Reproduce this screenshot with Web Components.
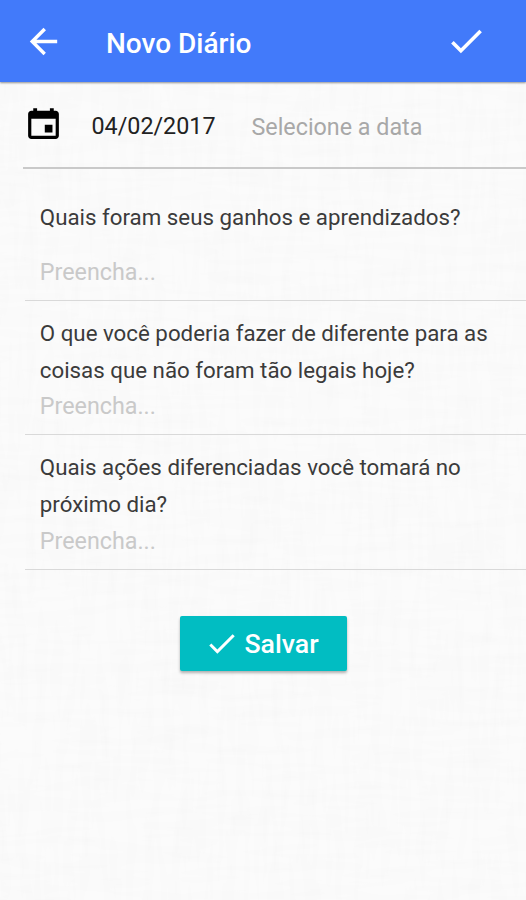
<!DOCTYPE html>
<html lang="pt-BR">
<head>
<meta charset="utf-8">
<title>Novo Diário</title>
<style>
html, body { margin: 0; height: 100%; }
body { font-family: Roboto, sans-serif; background: #f9f9f9; overflow: hidden; }
</style>
</head>
<body>
<script>
const ICONS = {
  back: "M427 234.625H167.296l119.702-119.702L256 85 85 256l171 171 29.922-29.924-118.626-119.701H427v-42.75z",
  check: "M186.301 339.893L96 249.461l-32 30.507L186.301 402 448 140.506 416 110z",
  calendar: "M368.005 272h-96v96h96v-96zm-32-208v32h-160V64h-48v32h-24.01c-22.002 0-40 17.998-40 40v272c0 22.002 17.998 40 40 40h304.01c22.002 0 40-17.998 40-40V136c0-22.002-17.998-40-40-40h-24V64h-48zm72 344h-304.01V196h304.01v212z"
};

class UiIcon extends HTMLElement {
  connectedCallback() {
    this.attachShadow({ mode: "open" }).innerHTML = `
      <style>:host{display:block;flex:none;width:var(--size,41px);height:var(--size,41px)}svg{display:block;width:100%;height:100%;fill:currentColor}</style>
      <svg viewBox="0 0 512 512" aria-hidden="true"><path d="${ICONS[this.getAttribute("name")]}"/></svg>`;
  }
}

class AppBar extends HTMLElement {
  connectedCallback() {
    this.attachShadow({ mode: "open" }).innerHTML = `
      <style>
        :host{display:flex;align-items:center;box-sizing:border-box;height:82px;padding:1px 39px 0 23px;
          background:#427afa;color:#fff;box-shadow:0 1px 2px rgba(0,0,0,.42)}
        h1{flex:1;margin:4px 0 0 42px;font-size:28px;line-height:36px;font-weight:500}
      </style>
      <ui-icon name="back"></ui-icon><h1><slot></slot></h1><ui-icon name="check"></ui-icon>`;
  }
}

class DateRow extends HTMLElement {
  connectedCallback() {
    this.attachShadow({ mode: "open" }).innerHTML = `
      <style>
        :host{display:flex;align-items:center;box-sizing:border-box;height:86.5px;margin-left:23px;
          padding:3px 0 0;border-bottom:2px solid #c9c9c9;font-size:23.3px;line-height:28px;color:#222}
        ui-icon{color:#000;--size:41px;margin:-5px 27.5px 0 0}
        .hint{margin:2px 0 0 36px;color:#a8a8a8}
      </style>
      <ui-icon name="calendar"></ui-icon><span><slot></slot></span><span class="hint">${this.getAttribute("hint")}</span>`;
  }
}

class DiaryQuestion extends HTMLElement {
  connectedCallback() {
    this.attachShadow({ mode: "open" }).innerHTML = `
      <style>
        :host{display:flex;flex-direction:column;box-sizing:border-box;height:var(--height,134.5px);
          margin-left:25px;padding:var(--top,14px) 24px 0 14.8px;border-bottom:1.5px solid #d9d9d9}
        .label{font-size:22.3px;line-height:37px;color:#3b3b3b}
        .entry{margin-top:var(--gap,4.3px);font-size:23.3px;line-height:26px;color:#c9c9c9}
      </style>
      <div class="label"><slot></slot></div><div class="entry">Preencha...</div>`;
  }
}

class SaveButton extends HTMLElement {
  connectedCallback() {
    this.attachShadow({ mode: "open" }).innerHTML = `
      <style>
        :host{display:flex;justify-content:center;margin:46px 0 0 1px}
        button{display:flex;align-items:center;justify-content:center;gap:5.5px;width:167px;height:55px;
          border:0;border-radius:2px;padding:2px 3.5px 0 0;background:#01bdc2;color:#fff;
          font:500 26.7px/32px Roboto,sans-serif;box-shadow:0 2px 3px rgba(0,0,0,.3)}
        ui-icon{--size:34px}
      </style>
      <button type="button"><ui-icon name="check"></ui-icon><span><slot></slot></span></button>`;
  }
}

class DiaryPage extends HTMLElement {
  connectedCallback() {
    this.attachShadow({ mode: "open" }).innerHTML = `
      <style>
        :host{display:block;position:relative;height:900px;max-height:100vh;isolation:isolate;overflow:hidden}
        .linen{position:absolute;inset:0;width:100%;height:100%;z-index:-1}
      </style>
      <svg class="linen" aria-hidden="true">
        <filter id="h" x="0" y="0" width="100%" height="100%">
          <feTurbulence type="fractalNoise" baseFrequency="0.014 0.11" numOctaves="2" seed="4"/>
          <feColorMatrix values="0 0 0 0 0.5  0 0 0 0 0.5  0 0 0 0 0.5  0.07 0 0 0 -0.027"/>
        </filter>
        <filter id="v" x="0" y="0" width="100%" height="100%">
          <feTurbulence type="fractalNoise" baseFrequency="0.11 0.014" numOctaves="2" seed="9"/>
          <feColorMatrix values="0 0 0 0 0.5  0 0 0 0 0.5  0 0 0 0 0.5  0.07 0 0 0 -0.027"/>
        </filter>
        <rect width="100%" height="100%" fill="#fbfbfb"/>
        <rect width="100%" height="100%" filter="url(#h)"/>
        <rect width="100%" height="100%" filter="url(#v)"/>
      </svg>
      <slot></slot>`;
  }
}

customElements.define("ui-icon", UiIcon);
customElements.define("app-bar", AppBar);
customElements.define("date-row", DateRow);
customElements.define("diary-question", DiaryQuestion);
customElements.define("save-button", SaveButton);
customElements.define("diary-page", DiaryPage);
</script>
<diary-page>
  <app-bar>Novo Diário</app-bar>
  <date-row hint="Selecione a data">04/02/2017</date-row>
  <diary-question style="--height:132.3px;--top:30px;--gap:23px">Quais foram seus ganhos e aprendizados?</diary-question>
  <diary-question>O que você poderia fazer de diferente para as coisas que não foram tão legais hoje?</diary-question>
  <diary-question>Quais ações diferenciadas você tomará no próximo dia?</diary-question>
  <save-button>Salvar</save-button>
</diary-page>
</body>
</html>
